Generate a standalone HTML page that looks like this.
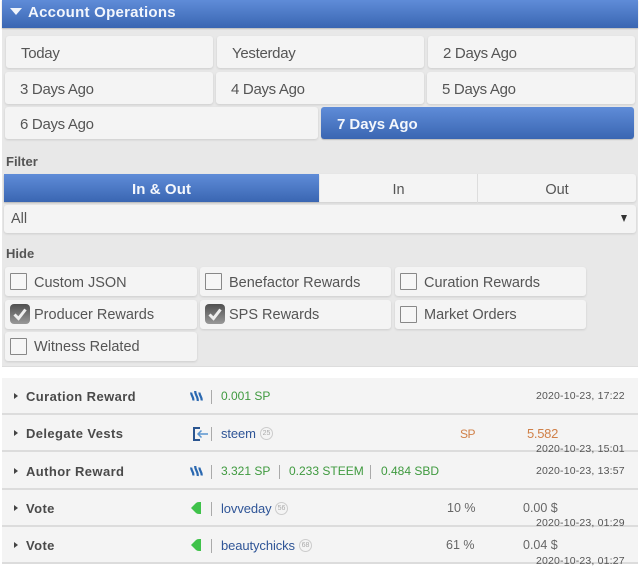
<!DOCTYPE html>
<html><head><meta charset="utf-8"><style>
html,body{margin:0;padding:0;background:#fff}
#p{position:relative;width:640px;height:568px;overflow:hidden;background:#fff;font-family:"Liberation Sans",sans-serif;color:#555}
#p div{position:absolute;box-sizing:border-box;white-space:nowrap}
.b{background:#f4f4f4;border-radius:3px;box-shadow:0 1px 2px #ccc;height:32px;font-size:15px;line-height:35px;letter-spacing:-.3px;color:#555;padding-left:15px}
.a{background:linear-gradient(#5f8cd8,#3a66b2);color:#f4f7fc;font-weight:bold;box-shadow:0 1px 1px #bbb;letter-spacing:-.05px}
.c{background:#f4f4f4;border-radius:3px;box-shadow:0 1px 2px #ccc;height:29px;font-size:14.5px;line-height:30px;letter-spacing:0;color:#555;padding-left:29px}
.k{left:5px;top:6px;width:17px;height:17px;border:1px solid #888;background:#f6f6f6;border-radius:1px}
.k.on{top:4px;left:5px;width:20px;height:20px;border:0;border-radius:4px;background:linear-gradient(#505050,#999)}
.l{left:2px;width:636px;height:2px;background:#dcdcdc}
.t{font-size:13px;font-weight:bold;color:#4a4a4a;left:26px;letter-spacing:.4px}
.ar{left:14px;width:0;height:0;border-left:4px solid #444;border-top:3.5px solid transparent;border-bottom:3.5px solid transparent}
.s{left:211px;width:1px;height:14px;background:#aaa}
.g{color:#3f9a3f;font-size:12px;letter-spacing:0;line-height:15px}
.u{color:#2f5597;font-size:13px;left:221px;letter-spacing:-.1px}
.d{font-size:10.5px;color:#555;left:536px;letter-spacing:.17px}
.n{font-size:12.5px;color:#666;letter-spacing:0}
.o{width:13px;height:13px;border:1px solid #ccc;border-radius:50%;font-size:7px;line-height:11px;text-align:center;color:#aaa}
.r{left:2px;width:636px;background:#f4f4f4}
</style></head><body><div id="p">
<div style="left:2px;top:0;width:636px;height:366px;background:#e8e8e8"></div>
<div class="a" style="left:2px;top:0;width:636px;height:28px"></div>
<div style="left:10px;top:8px;width:0;height:0;border-top:7px solid #f0f4fb;border-left:6.5px solid transparent;border-right:6.5px solid transparent"></div>
<div style="left:28px;top:3px;font-size:15px;font-weight:bold;color:#f2f6fd;letter-spacing:.25px;line-height:19px">Account Operations</div>

<div class="b" style="left:6px;top:36px;width:207px">Today</div>
<div class="b" style="left:217px;top:36px;width:207px">Yesterday</div>
<div class="b" style="left:428px;top:36px;width:207px">2 Days Ago</div>
<div class="b" style="left:5px;top:72px;width:208px">3 Days Ago</div>
<div class="b" style="left:216px;top:72px;width:208px">4 Days Ago</div>
<div class="b" style="left:427px;top:72px;width:208px">5 Days Ago</div>
<div class="b" style="left:5px;top:107px;width:313px">6 Days Ago</div>
<div class="b a" style="left:321px;top:107px;width:313px;padding-left:16px">7 Days Ago</div>

<div style="left:6px;top:154px;font-size:13px;font-weight:bold;color:#555;line-height:16px">Filter</div>
<div class="b" style="left:4px;top:174px;width:632px;height:28px"></div>
<div class="b a" style="left:4px;top:174px;width:315px;height:28px;padding:0;text-align:center;line-height:31px;border-radius:0;font-size:15px;letter-spacing:.1px">In &amp; Out</div>
<div style="left:477px;top:174px;width:1px;height:29px;background:#ddd"></div>
<div style="left:320px;top:174px;width:157px;height:28px;text-align:center;font-size:14.5px;line-height:32px">In</div>
<div style="left:478px;top:174px;width:158px;height:28px;text-align:center;font-size:14.5px;line-height:32px">Out</div>
<div class="b" style="left:4px;top:205px;width:632px;height:28px;padding-left:7px;line-height:29px;font-size:14.5px;letter-spacing:0">All</div>
<div style="left:621px;top:215px;width:0;height:0;border-top:7px solid #333;border-left:3.5px solid transparent;border-right:3.5px solid transparent"></div>
<div style="left:6px;top:246px;font-size:13px;font-weight:bold;color:#555;line-height:16px">Hide</div>

<div class="c" style="left:5px;top:267px;width:192px;line-height:32px"><div class="k"></div>Custom JSON</div>
<div class="c" style="left:200px;top:267px;width:191px;line-height:32px"><div class="k"></div>Benefactor Rewards</div>
<div class="c" style="left:395px;top:267px;width:191px;line-height:32px"><div class="k"></div>Curation Rewards</div>
<div class="c" style="left:5px;top:300px;width:192px"><div class="k on"><svg width="20" height="20" style="display:block"><path d="M4.5 10.5l4 4 7-9" fill="none" stroke="#eee" stroke-width="3"/></svg></div>Producer Rewards</div>
<div class="c" style="left:200px;top:300px;width:191px"><div class="k on"><svg width="20" height="20" style="display:block"><path d="M4.5 10.5l4 4 7-9" fill="none" stroke="#eee" stroke-width="3"/></svg></div>SPS Rewards</div>
<div class="c" style="left:395px;top:300px;width:191px"><div class="k"></div>Market Orders</div>
<div class="c" style="left:5px;top:332px;width:192px"><div class="k"></div>Witness Related</div>

<div class="r" style="top:378px;height:186px"></div>
<div style="left:2px;top:366px;width:636px;height:1px;background:#ddd"></div>
<div class="l" style="top:413px"></div>
<div class="l" style="top:450px"></div>
<div class="l" style="top:488px"></div>
<div class="l" style="top:525px"></div>
<div class="l" style="top:562px"></div>

<div class="ar" style="top:393px"></div><div class="t" style="top:389px">Curation Reward</div>
<svg style="position:absolute;left:190px;top:390px" width="13" height="13" viewBox="0 0 13 13"><g fill="none" stroke="#2a68b0" stroke-width="2.2"><path d="M1.200 2.500C1 5.500 3.800 7 3.300 10.500"/><path d="M5.200 1C5 5 8.200 6.500 7.700 11"/><path d="M9.500 2.500C9.300 5.500 12.100 7 11.600 10.500"/></g></svg>
<div class="s" style="top:390px"></div>
<div class="g" style="left:221px;top:389px">0.001 SP</div>
<div class="d" style="top:390px">2020-10-23, 17:22</div>

<div class="ar" style="top:430px"></div><div class="t" style="top:426px">Delegate Vests</div>
<svg style="position:absolute;left:193px;top:427px" width="15" height="14" viewBox="0 0 15 14"><path d="M7 1H1v12h6" fill="none" stroke="#2a5590" stroke-width="2"/><path d="M15 7H5M8.500 3.500L5 7l3.500 3.500" fill="none" stroke="#5a94cf" stroke-width="1.500"/></svg>
<div class="s" style="top:427px"></div>
<div class="u" style="top:426px">steem</div><div class="o" style="left:260px;top:427px">25</div>
<div style="left:460px;top:427px;font-size:12px;letter-spacing:-.5px;color:#d08048">SP</div>
<div style="left:527px;top:426px;font-size:13px;color:#d08048;letter-spacing:-.3px">5.582</div>
<div class="d" style="top:443px">2020-10-23, 15:01</div>

<div class="ar" style="top:468px"></div><div class="t" style="top:464px">Author Reward</div>
<svg style="position:absolute;left:190px;top:465px" width="13" height="13" viewBox="0 0 13 13"><g fill="none" stroke="#2a68b0" stroke-width="2.2"><path d="M1.200 2.500C1 5.500 3.800 7 3.300 10.500"/><path d="M5.200 1C5 5 8.200 6.500 7.700 11"/><path d="M9.500 2.500C9.300 5.500 12.100 7 11.600 10.500"/></g></svg>
<div class="s" style="top:465px"></div>
<div class="g" style="left:221px;top:464px">3.321 SP</div><div class="s" style="left:279px;top:465px"></div>
<div class="g" style="left:289px;top:464px">0.233 STEEM</div><div class="s" style="left:370px;top:465px"></div>
<div class="g" style="left:381px;top:464px">0.484 SBD</div>
<div class="d" style="top:465px">2020-10-23, 13:57</div>

<div class="ar" style="top:505px"></div><div class="t" style="top:501px">Vote</div>
<svg style="position:absolute;left:191px;top:502px" width="10" height="12" viewBox="0 0 10 12"><path d="M0 6L5 1Q6 0 8 0H10V12H8Q6 12 5 11Z" fill="#3fc24a"/></svg>
<div class="s" style="top:502px"></div>
<div class="u" style="top:501px">lovveday</div><div class="o" style="left:275px;top:502px">56</div>
<div class="n" style="left:447px;top:501px">10 %</div>
<div class="n" style="left:523px;top:501px">0.00 $</div>
<div class="d" style="top:517px">2020-10-23, 01:29</div>

<div class="ar" style="top:542px"></div><div class="t" style="top:538px">Vote</div>
<svg style="position:absolute;left:191px;top:539px" width="10" height="12" viewBox="0 0 10 12"><path d="M0 6L5 1Q6 0 8 0H10V12H8Q6 12 5 11Z" fill="#3fc24a"/></svg>
<div class="s" style="top:539px"></div>
<div class="u" style="top:538px">beautychicks</div><div class="o" style="left:299px;top:539px">68</div>
<div class="n" style="left:446px;top:538px">61 %</div>
<div class="n" style="left:523px;top:538px">0.04 $</div>
<div class="d" style="top:555px">2020-10-23, 01:27</div>
</div></body></html>
